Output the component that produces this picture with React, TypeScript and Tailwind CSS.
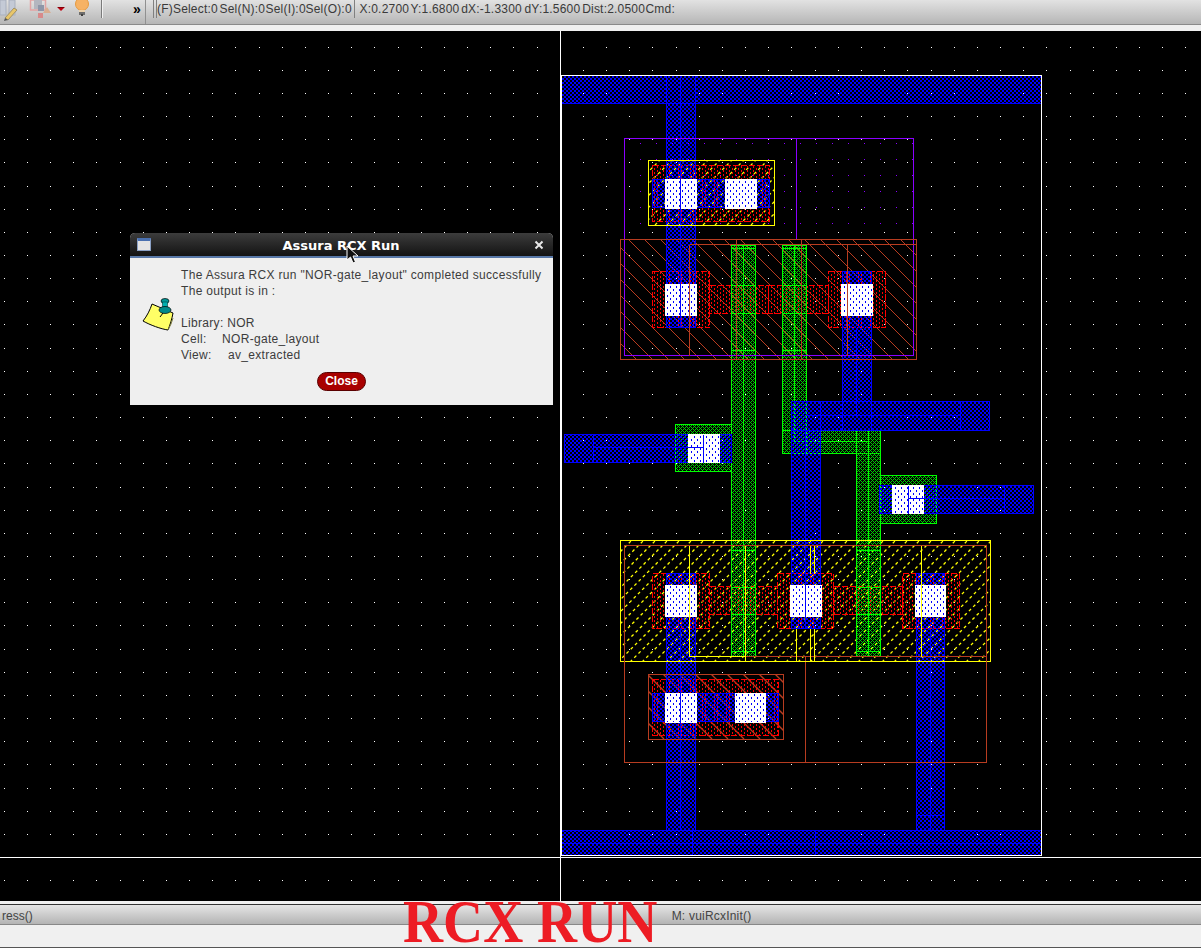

const BLUE = '#0000ff'
const GREEN = '#00ff00'
const RED = '#ff0000'
const ORANGE = '#b83c20'
const YELLOW = '#ffff00'
const PURPLE = '#8a00ff'

const gridDots: { x: number; y: number }[] = []
for (let r = 0; r < 37; r++) {
  for (let c = 0; c < 52; c++) {
    gridDots.push({ x: Math.round(3.7 + c * 23.17), y: Math.round(46.7 + r * 23.15) })
  }
}

type R = [number, number, number, number]

const diffusion: R[] = [
  [652, 165, 769, 221],
  [652, 271, 709, 327],
  [709, 285, 768, 313],
  [768, 285, 828, 313],
  [828, 271, 885, 327],
  [652, 573, 709, 628],
  [709, 586, 777, 614],
  [777, 573, 833, 628],
  [833, 586, 902, 614],
  [902, 573, 959, 628],
  [652, 679, 778, 735],
]
const poly: R[] = [
  [731, 245, 755, 656],
  [782, 245, 806, 453],
  [782, 430, 880, 453],
  [856, 430, 880, 656],
  [675, 424, 731, 471],
  [880, 475, 936, 523],
]
const metal: R[] = [
  [561, 75, 1041, 103],
  [666, 75, 695, 327],
  [842, 271, 871, 430],
  [791, 401, 989, 430],
  [791, 401, 820, 628],
  [564, 434, 731, 462],
  [879, 485, 1033, 513],
  [666, 573, 695, 830],
  [916, 573, 944, 830],
  [561, 830, 1041, 855],
  [652, 179, 769, 207],
  [652, 693, 778, 721],
]
const contacts: R[] = [
  [665, 179, 696, 208],
  [725, 179, 756, 208],
  [665, 284, 696, 315],
  [841, 284, 872, 315],
  [688, 434, 719, 462],
  [892, 485, 923, 513],
  [665, 585, 696, 616],
  [790, 585, 821, 616],
  [915, 585, 945, 616],
  [665, 693, 696, 722],
  [735, 693, 765, 722],
]
// x1, y1, x2, y2
const orangeLines: R[] = [
  [689, 244, 689, 355],
  [689, 244, 916, 244],
  [847, 244, 847, 355],
  [736, 239, 736, 359],
  [801, 239, 801, 359],
  [745, 656, 986, 656],
  [805, 656, 805, 762],
]
const yellowLines: R[] = [
  [689, 545, 689, 656],
  [689, 656, 745, 656],
  [745, 545, 745, 661],
  [796, 628, 796, 661],
  [810, 545, 810, 573],
  [814, 545, 814, 573],
  [810, 628, 810, 661],
  [814, 628, 814, 661],
  [921, 545, 921, 656],
]
const greenLines: R[] = [
  [743, 245, 743, 656],
  [794, 245, 794, 441],
  [794, 441, 868, 441],
  [868, 430, 868, 656],
  [731, 248, 755, 248],
  [731, 285, 755, 285],
  [731, 313, 755, 313],
  [731, 350, 755, 350],
  [782, 248, 806, 248],
  [782, 285, 806, 285],
  [782, 313, 806, 313],
  [782, 350, 806, 350],
  [731, 550, 755, 550],
  [731, 587, 755, 587],
  [731, 614, 755, 614],
  [731, 651, 755, 651],
  [856, 550, 880, 550],
  [856, 587, 880, 587],
  [856, 614, 880, 614],
  [856, 651, 880, 651],
]
const blueLines: R[] = [
  [680, 75, 680, 327],
  [856, 327, 856, 415],
  [806, 415, 960, 415],
  [960, 401, 960, 430],
  [805, 430, 805, 628],
  [593, 434, 593, 462],
  [593, 447, 703, 447],
  [703, 434, 703, 462],
  [1004, 485, 1004, 513],
  [908, 498, 1004, 498],
  [908, 485, 908, 513],
  [680, 628, 680, 830],
  [930, 628, 930, 830],
  [916, 815, 944, 815],
  [561, 843, 1041, 843],
  [815, 830, 815, 855],
  [692, 830, 692, 855],
]

function Box({ r, stroke, fill = 'none', dash }: { r: R; stroke: string; fill?: string; dash?: string }) {
  return (
    <rect
      x={r[0] + 0.5}
      y={r[1] + 0.5}
      width={r[2] - r[0]}
      height={r[3] - r[1]}
      stroke={stroke}
      fill={fill}
      strokeDasharray={dash}
    />
  )
}

function Lines({ list, stroke }: { list: R[]; stroke: string }) {
  return (
    <>
      {list.map((l, i) => (
        <line key={i} x1={l[0] + 0.5} y1={l[1] + 0.5} x2={l[2] + 0.5} y2={l[3] + 0.5} stroke={stroke} />
      ))}
    </>
  )
}

// diagonal hatch drawn as real lines clipped to the layer's box
function Hatch({ id, r, color, step, rising, dash, weight = 1 }: { id: string; r: R; color: string; step: number; rising?: boolean; dash?: string; weight?: number }) {
  const w = r[2] - r[0]
  const h = r[3] - r[1]
  const offsets: number[] = []
  for (let o = -h; o < w; o += step) offsets.push(o)
  return (
    <g clipPath={`url(#${id})`} shapeRendering="auto" strokeWidth={weight}>
      <clipPath id={id}>
        <rect x={r[0]} y={r[1]} width={w} height={h} />
      </clipPath>
      {offsets.map((o) =>
        rising ? (
          <line key={o} x1={r[0] + o} y1={r[3]} x2={r[0] + o + h} y2={r[1]} stroke={color} strokeDasharray={dash} />
        ) : (
          <line key={o} x1={r[0] + o} y1={r[1]} x2={r[0] + o + h} y2={r[3]} stroke={color} strokeDasharray={dash} />
        ),
      )}
    </g>
  )
}

function LayoutCanvas() {
  return (
    <svg className="block w-full h-full" viewBox="0 31 1201 870" shapeRendering="crispEdges">
      <defs>
        <pattern id="metalFill" width="4" height="4" patternUnits="userSpaceOnUse">
          <rect x="0" y="0" width="2" height="2" fill={BLUE} />
          <rect x="2" y="2" width="2" height="2" fill={BLUE} />
        </pattern>
        <pattern id="polyFill" width="4" height="4" patternUnits="userSpaceOnUse">
          <rect x="0" y="0" width="1" height="1" fill="#00d000" />
          <rect x="1" y="1" width="1" height="1" fill="#00d000" />
          <rect x="3" y="1" width="1" height="1" fill="#00d000" />
          <rect x="2" y="2" width="1" height="1" fill="#00d000" />
          <rect x="1" y="3" width="1" height="1" fill="#00d000" />
          <rect x="3" y="3" width="1" height="1" fill="#00d000" />
        </pattern>
        <pattern id="diffFill" width="6" height="4" patternUnits="userSpaceOnUse">
          <rect x="0" y="0" width="1" height="2" fill={RED} />
          <rect x="3" y="2" width="1" height="2" fill={RED} />
        </pattern>
        <pattern id="contactFill" width="6" height="6" patternUnits="userSpaceOnUse">
          <rect width="6" height="6" fill="#ffffff" />
          <rect x="1" y="1" width="1" height="2" fill={BLUE} />
          <rect x="4" y="4" width="1" height="2" fill={BLUE} />
        </pattern>
        <pattern id="purpleDots" x="640" y="143" width="16" height="16" patternUnits="userSpaceOnUse">
          <rect width="1" height="1" fill={PURPLE} />
        </pattern>
      </defs>

      {gridDots.map((d, i) => (
        <rect key={i} x={d.x} y={d.y} width="1" height="1" fill="#ffffff" />
      ))}

      <rect x="624" y="138" width="289" height="102" fill="url(#purpleDots)" />

      <Hatch id="hatchA" r={[620, 239, 916, 359]} color={ORANGE} step={16} />
      <Hatch id="hatchB" r={[648, 674, 783, 739]} color={ORANGE} step={16} weight={1.3} />
      <Hatch id="hatchC" r={[648, 160, 774, 225]} color={YELLOW} step={12} rising dash="3 3" weight={1.3} />
      <Hatch id="hatchD" r={[620, 540, 990, 662]} color={YELLOW} step={12} rising dash="3 3" weight={1.3} />

      {diffusion.map((r, i) => (
        <Box key={i} r={r} stroke={RED} fill="url(#diffFill)" dash="6 2" />
      ))}
      {poly.map((r, i) => (
        <Box key={i} r={r} stroke={GREEN} fill="url(#polyFill)" />
      ))}
      <Lines list={greenLines} stroke={GREEN} />
      {metal.map((r, i) => (
        <Box key={i} r={r} stroke={BLUE} fill="url(#metalFill)" />
      ))}
      {contacts.map((r, i) => (
        <Box key={i} r={r} stroke="#ffffff" fill="url(#contactFill)" />
      ))}
      <Lines list={blueLines} stroke={BLUE} />

      {/* cell boundaries */}
      <Box r={[624, 138, 913, 355]} stroke={PURPLE} />
      <line x1="796.5" y1="138" x2="796.5" y2="240" stroke={PURPLE} />
      <line x1="848.5" y1="244" x2="913" y2="244.5" stroke={PURPLE} />
      <Box r={[620, 239, 916, 359]} stroke={ORANGE} />
      <Lines list={orangeLines} stroke={ORANGE} />
      <Box r={[648, 160, 774, 225]} stroke={YELLOW} />
      <Box r={[620, 540, 990, 661]} stroke={YELLOW} />
      <Lines list={yellowLines} stroke={YELLOW} />
      <Box r={[624, 545, 986, 762]} stroke={ORANGE} />
      <Box r={[648, 674, 783, 739]} stroke={ORANGE} />
      <Box r={[561, 75, 1041, 855]} stroke="#ffffff" />

      {/* axes */}
      <line x1="560.5" y1="31" x2="560.5" y2="901" stroke="#ffffff" />
      <line x1="0" y1="857.5" x2="1201" y2="857.5" stroke="#ffffff" />
    </svg>
  )
}

function ToolbarIcons() {
  return (
    <svg width="110" height="24" viewBox="0 0 110 24" className="shrink-0">
      <rect x="0" y="0" width="6" height="15" fill="#c4cad6" stroke="#a9b0be" />
      <rect x="9" y="0" width="6" height="15" fill="#c4cad6" stroke="#a9b0be" />
      <path d="M5 18L14 8L17 10L8 20Z" fill="#e8c66a" stroke="#8a7a50" strokeWidth="0.7" />
      <path d="M5 18L4 21L8 20Z" fill="#555555" />
      <rect x="30.5" y="0" width="15" height="10" fill="none" stroke="#e2a4a4" strokeWidth="1.5" />
      <rect x="34" y="0" width="8" height="9" fill="#b3b6bf" />
      <rect x="38" y="5" width="6" height="6" fill="#8e96a8" />
      <path d="M43 13L47 7L51 13Z" fill="#d8ae90" />
      <rect x="38" y="13" width="5" height="5" fill="#d88a8a" />
      <path d="M57 7H65L61 11Z" fill="#c00010" />
      <rect x="58" y="7" width="6" height="1" fill="#800008" />
      <circle cx="82" cy="4" r="6.5" fill="#f6b264" stroke="#e59a40" />
      <rect x="79" y="10" width="6" height="3" fill="#ecd2ac" />
      <rect x="79" y="12" width="6" height="3" fill="#6e6e6e" />
      <rect x="81" y="14" width="2" height="2" fill="#404040" />
      <rect x="101" y="0" width="1" height="18" fill="#7a7a7a" />
      <rect x="102" y="0" width="1" height="18" fill="#f0f0f0" />
    </svg>
  )
}

function NoteIcon() {
  return (
    <svg width="36" height="36" viewBox="0 0 36 36" className="shrink-0">
      <path d="M10 6L31 15C30 21 28 27 26 32C19 31 8 27 1 23C5 18 8 12 10 6Z" fill="#ffff66" stroke="#000000" strokeWidth="1" />
      <path d="M26 32L29 26L31 20" stroke="#808040" fill="none" />
      <ellipse cx="23" cy="3" rx="4" ry="2.5" fill="#009a9a" stroke="#000000" strokeWidth="0.7" />
      <rect x="20.5" y="4" width="5" height="6" fill="#00b0b0" stroke="#004444" strokeWidth="0.6" />
      <ellipse cx="23" cy="12" rx="6" ry="3.5" fill="#008a8a" stroke="#000000" strokeWidth="0.7" />
      <path d="M21 15L18 19" stroke="#000000" />
    </svg>
  )
}

function Cursor() {
  return (
    <svg width="14" height="20" viewBox="0 0 14 20" className="absolute left-[216px] top-[12px]">
      <path d="M1 1V15L4.5 12L7 18L9.5 17L7 11H12Z" fill="#111111" stroke="#ffffff" strokeWidth="1" />
    </svg>
  )
}

function RcxDialog() {
  return (
    <div className="absolute left-[130px] top-[202px] w-[423px] h-[172px] rounded-t-[5px] bg-[#efefef] flex flex-col font-['Liberation_Sans',sans-serif]">
      <div className="h-[25px] shrink-0 rounded-t-[5px] flex items-center justify-between pl-[7px] pr-[9px] bg-gradient-to-b from-[#3c3c3c] to-[#141414] border-b-2 border-[#5878a8] relative">
        <div className="w-[14px] h-[13px] bg-[#e4e4e4] border border-[#8ba0c4] border-t-[3px] border-t-[#4a70b0]" />
        <span className="absolute left-0 right-0 top-0 text-center text-white font-bold text-[13px] leading-[25px] font-['DejaVu_Sans',sans-serif] pr-[1px]">
          Assura RCX Run
        </span>
        <svg width="10" height="10" viewBox="0 0 10 10">
          <path d="M1.5 1.5L8.5 8.5M8.5 1.5L1.5 8.5" stroke="#e8e8e8" strokeWidth="2" />
        </svg>
        <Cursor />
      </div>
      <div className="flex-1 flex pl-[12px] pt-[9px]">
        <div className="w-[39px] shrink-0 pt-[31px]">
          <NoteIcon />
        </div>
        <div className="flex flex-col text-[12px] leading-[16px] text-[#3c3c3c] tracking-[0.32px]">
          <p className="whitespace-pre">The Assura RCX run "NOR-gate_layout" completed successfully</p>
          <p>The output is in :</p>
          <p className="h-[16px]" />
          <p>Library: NOR</p>
          <div className="flex">
            <span className="w-[41px]">Cell:</span>
            <span>NOR-gate_layout</span>
          </div>
          <div className="flex">
            <span className="w-[47px]">View:</span>
            <span>av_extracted</span>
          </div>
        </div>
      </div>
      <div className="flex justify-center pb-[14px] pr-[0px]">
        <button className="w-[49px] h-[19px] rounded-full bg-[#a80000] border border-[#5a0000] text-white font-bold text-[12px] leading-[15px]">
          Close
        </button>
      </div>
    </div>
  )
}

export default function App() {
  return (
    <div className="relative w-[1201px] h-[948px] overflow-hidden flex flex-col bg-[#f0f0f0] font-['Liberation_Sans',sans-serif]">
      {/* Toolbar */}
      <div className="h-[25px] shrink-0 flex items-start bg-gradient-to-b from-[#e2e2e2] to-[#b6b6b6] border-b border-[#8a8a8a] text-[12px] text-[#3a3a3a]">
        <ToolbarIcons />
        <span className="ml-[23px] mt-[1px] w-[8px] font-bold text-[14px] leading-[16px] text-black">»</span>
        <div className="ml-[4px] w-[1px] h-[24px] bg-[#909090]" />
        <div className="ml-[7px] w-[4px] h-[18px] border-x border-[#808080]" />
        <div className="flex leading-[18px] tracking-[0.2px] whitespace-nowrap">
          <span className="w-[62.5px]">(F)Select:0</span>
          <span className="w-[46px]">Sel(N):0</span>
          <span className="w-[40px]">Sel(I):0</span>
          <span className="w-[48px]">Sel(O):0</span>
        </div>
        <div className="w-[1px] h-[18px] bg-[#808080]" />
        <div className="ml-[5px] flex leading-[18px] tracking-[0.2px] whitespace-nowrap">
          <span className="w-[51px]">X:0.2700</span>
          <span className="w-[50.7px]">Y:1.6800</span>
          <span className="w-[63.3px]">dX:-1.3300</span>
          <span className="w-[57.7px]">dY:1.5600</span>
          <span className="w-[63.3px]">Dist:2.0500</span>
          <span>Cmd:</span>
        </div>
      </div>
      <div className="h-[6px] shrink-0" />

      {/* Drawing area */}
      <div className="relative h-[870px] shrink-0 bg-black">
        <LayoutCanvas />
        <RcxDialog />
      </div>

      {/* Status bars */}
      <div className="h-[3px] shrink-0" />
      <div className="h-[1px] shrink-0 bg-[#333333]" />
      <div className="h-[20px] shrink-0 flex items-center pt-[2px] bg-gradient-to-b from-[#e6e6e6] to-[#b4b4b4] border-b border-[#888888] text-[12px] text-[#444444]">
        <span className="ml-[2px]">ress()</span>
        <span className="ml-[639px] tracking-[0.2px]">M: vuiRcxInit()</span>
      </div>
      <div className="flex-1" />
      <div className="h-[1px] shrink-0 bg-[#555555]" />

      <div className="absolute left-[403px] top-[897px] origin-left scale-x-[0.895] font-['Liberation_Serif',serif] font-bold text-[62px] leading-[48px] text-[#ed1c24] whitespace-nowrap">
        RCX RUN
      </div>
    </div>
  )
}
